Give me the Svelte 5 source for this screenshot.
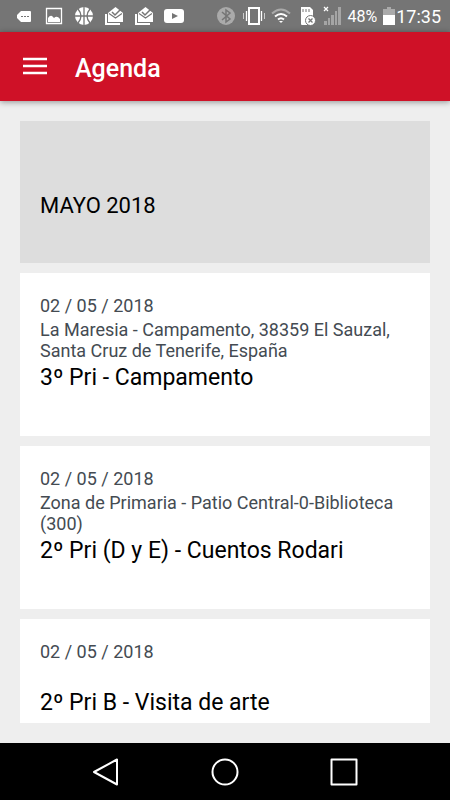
<script>
  let month = 'MAYO 2018';

  let events = [
    {
      date: '02 / 05 / 2018',
      place: 'La Maresia - Campamento, 38359 El Sauzal, Santa Cruz de Tenerife, España',
      title: '3º Pri - Campamento'
    },
    {
      date: '02 / 05 / 2018',
      place: 'Zona de Primaria - Patio Central-0-Biblioteca (300)',
      title: '2º Pri (D y E) - Cuentos Rodari'
    },
    {
      date: '02 / 05 / 2018',
      place: '',
      title: '2º Pri B - Visita de arte'
    }
  ];
</script>

{#snippet inbox()}
  <svg width="18" height="18" viewBox="0 0 18 18">
    <path d="M0 7h2v9h13v2H0z" fill="#fff" />
    <path d="M3 6l7.500-6L18 6v9H3z" fill="#fff" />
    <path d="M4 6.500l6.500 4.500L17 6.500" fill="none" stroke="#757575" stroke-width="1.200" />
    <path d="M7 5l3 3 6-6" fill="none" stroke="#757575" stroke-width="1.500" />
  </svg>
{/snippet}

<div class="screen">
  <div class="status">
    <div class="notifications">
      <svg width="18" height="18" viewBox="0 0 18 18">
        <path d="M6 4h9q1 0 1 1v9q0 1-1 1H6L2 11V8z" fill="#fff" />
        <path d="M6 9h2v1H6zM9 9h2v1H9zM12 9h2v1h-2z" fill="#757575" />
      </svg>
      <svg width="18" height="18" viewBox="0 0 18 18">
        <path d="M1.500 1.500h15v15h-15z" fill="none" stroke="#fff" stroke-width="1.300" />
        <path d="M3 15v-4q2-3 4-2l2 2q3-3 6 1v3z" fill="#fff" />
      </svg>
      <svg width="18" height="18" viewBox="0 0 18 18">
        <circle cx="9" cy="9" r="9" fill="#fff" />
        <path d="M9 0v18M0 9h18M3 2q6 7 0 14M15 2q-6 7 0 14" fill="none" stroke="#757575" stroke-width="1.300" />
      </svg>
      {@render inbox()}
      {@render inbox()}
      <svg width="18" height="18" viewBox="0 0 18 18">
        <rect x="-1" y="2" width="20" height="14" rx="3" fill="#fff" />
        <path d="M7 6l6 3-6 3z" fill="#757575" />
      </svg>
    </div>

    <div class="system">
      <svg width="22" height="18" viewBox="0 0 22 18">
        <circle cx="11" cy="9" r="9" fill="#aaa" />
        <path d="M7 5l8 7-4 3V3l4 3-8 7" fill="none" stroke="#757575" stroke-width="1.500" />
      </svg>
      <svg width="22" height="18" viewBox="0 0 22 18" fill="none" stroke="#fff">
        <rect x="6" y="1" width="10" height="16" stroke-width="2" />
        <path d="M3.500 4v10M18.500 4v10" stroke-width="1.300" />
        <path d="M.5 6v6M21.500 6v6" stroke="#ccc" />
      </svg>
      <svg width="20" height="18" viewBox="0 0 20 18" fill="none" stroke="#fff" stroke-width="2">
        <path d="M1 6.500q9-8 18 0" stroke="#aaa" />
        <path d="M4 9.500q6-5 12 0M7 12.500q3-2.500 6 0" />
        <path d="M8 14h4l-2 2z" fill="#fff" stroke="none" />
      </svg>
      <svg width="20" height="18" viewBox="0 0 20 18">
        <path d="M4 0h9l3 3v14q0 1-1 1H5q-1 0-1-1z" fill="#fff" />
        <path d="M6 2v3M9 2v3M12 2v3" stroke="#757575" />
        <circle cx="13.500" cy="13.500" r="5" fill="#fff" stroke="#757575" />
        <path d="M11.500 11.500l4 4M15.500 11.500l-4 4" stroke="#757575" stroke-width="1.300" />
      </svg>
      <svg width="18" height="18" viewBox="0 0 18 18">
        <path d="M1 14h3v4H1zM5 11h2v7H5zM8 8h3v10H8zM12 4h2v14h-2zM15 0h3v18h-3z" fill="#a5a5a5" />
        <path d="M1 0l4 4M5 0L1 4" stroke="#fff" stroke-width="1.300" />
      </svg>
      <span class="charge">48%</span>
      <div class="clock">
        <svg width="12" height="18" viewBox="0 0 12 18">
          <path d="M4 0h4v2h4v7H0V2h4z" fill="#aaa" />
          <path d="M0 8h12v10H0z" fill="#fff" />
        </svg>
        <time>17:35</time>
      </div>
    </div>
  </div>

  <header>
    <button class="menu" aria-label="Menú">
      <svg width="24" height="18" viewBox="0 0 24 18">
        <path d="M0 1h24M0 8h24M0 15h24" stroke="#fff" stroke-width="2.500" />
      </svg>
    </button>
    <h1>Agenda</h1>
  </header>

  <main>
    <div class="list">
      <h2 class="month">{month}</h2>

      {#each events as event}
        <article>
          <p class="date">{event.date}</p>
          <p class="place">{event.place}</p>
          <h3>{event.title}</h3>
        </article>
      {/each}
    </div>
  </main>

  <nav>
    <button aria-label="Atrás">
      <svg width="28" height="28" viewBox="0 0 28 28">
        <path d="M25 1.500v25L2 14z" />
      </svg>
    </button>
    <button aria-label="Inicio">
      <svg width="28" height="28" viewBox="0 0 28 28">
        <circle cx="14" cy="14" r="12.500" />
      </svg>
    </button>
    <button aria-label="Recientes">
      <svg width="28" height="28" viewBox="0 0 28 28">
        <path d="M1.500 1.500h25v25h-25z" />
      </svg>
    </button>
  </nav>
</div>

<style>
  :global(body) {
    margin: 0;
  }

  .screen {
    display: flex;
    flex-direction: column;
    height: 100vh;
    background: #eee;
    font-family: Roboto, sans-serif;
    color: #000;
  }

  h1, h2, h3, p {
    margin: 0;
    font-weight: 400;
  }

  button {
    display: flex;
    padding: 0;
    border: none;
    background: none;
  }

  svg {
    display: block;
    flex: none;
    overflow: visible;
  }

  .status {
    display: flex;
    justify-content: space-between;
    align-items: center;
    height: 32px;
    padding: 0 9px 0 15px;
    background: #757575;
    color: #fff;
  }

  .notifications {
    display: flex;
    gap: 12px;
  }

  .system {
    display: flex;
    align-items: center;
    gap: 6px;
  }

  .charge {
    font-size: 16px;
  }

  .clock {
    display: flex;
    align-items: center;
    gap: 1px;
    font-size: 18px;
  }

  header {
    display: flex;
    align-items: center;
    gap: 28px;
    height: 69px;
    padding: 0 23px;
    background: #cf1127;
    color: #fff;
    box-shadow: 0 1px 6px rgba(0, 0, 0, .4);
    z-index: 1;
  }

  h1 {
    padding-top: 4px;
    font-size: 25px;
    font-weight: 500;
    line-height: 32px;
  }

  main {
    display: flex;
    flex: 1;
    min-height: 0;
    padding: 20px;
  }

  .list {
    display: flex;
    flex-direction: column;
    flex: 1;
    gap: 10px;
    overflow: hidden;
  }

  .month {
    flex: none;
    padding: 71px 20px 43px;
    background: #ddd;
    font-size: 22px;
    line-height: 28px;
  }

  article {
    flex: none;
    padding: 22px 20px 43px;
    background: #fff;
  }

  .date,
  .place {
    color: #444b52;
    font-size: 18px;
    line-height: 21px;
  }

  .date {
    padding-bottom: 3px;
  }

  .place {
    min-height: 21px;
  }

  h3 {
    padding-top: 3px;
    padding-bottom: 1px;
    font-size: 23px;
    line-height: 28px;
  }

  nav {
    display: flex;
    justify-content: center;
    align-items: center;
    gap: 91px;
    height: 57px;
    background: #000;
  }

  nav svg {
    fill: none;
    stroke: #fff;
    stroke-width: 2;
    stroke-linejoin: round;
  }
</style>
